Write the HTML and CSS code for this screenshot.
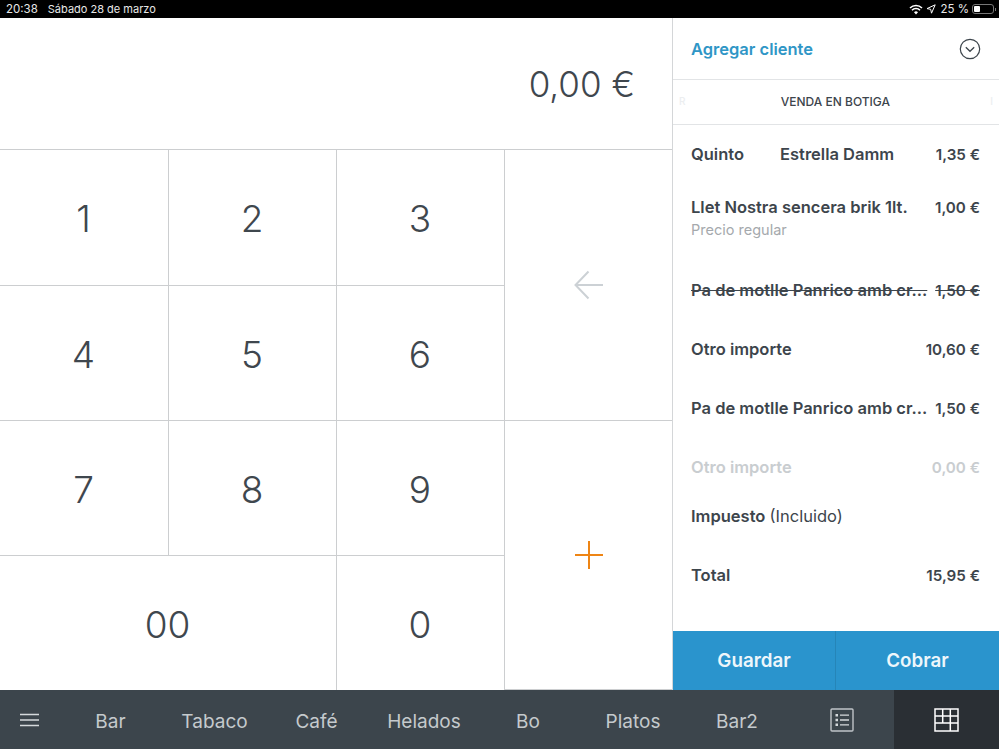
FILE: index.html
```html
<!DOCTYPE html>
<html lang="es">
<head>
<meta charset="utf-8">
<title>Punto de venta</title>
<link rel="stylesheet" href="styles.css">
</head>
<body>
<div class="app">
  <header class="status">
    <div class="status-left"><span class="time">20:38</span><span>Sábado 28 de marzo</span></div>
    <div class="status-right">
      <svg class="wifi" width="14" height="11" viewBox="0 0 14 11"><path d="M1 4a8.6 8.6 0 0 1 12 0M3 6.2a5.6 5.6 0 0 1 8 0" fill="none" stroke="#fff" stroke-width="1.6"/><path d="M5 8.2a2.9 2.9 0 0 1 4 0L7 10.4z" fill="#fff"/></svg>
      <svg class="loc" width="10" height="10" viewBox="0 0 10 10"><path d="M9.2.8 1 4.6l3.7.7.8 3.9z" fill="none" stroke="#fff" stroke-width="1"/></svg>
      <span class="pct">25 %</span>
      <span class="battery"><span class="battery-level"></span></span>
      <span class="battery-tip"></span>
    </div>
  </header>

  <div class="main">
    <section class="register">
      <div class="display">0,00 €</div>
      <div class="keypad">
        <button class="key">1</button>
        <button class="key">2</button>
        <button class="key">3</button>
        <button class="key key-side key-tall">
          <svg width="30" height="30" viewBox="0 0 30 30"><path d="M29 15H2M14.500 1.500 1.500 15l13 13.500" fill="none" stroke="#ccd1d5" stroke-width="2"/></svg>
        </button>
        <button class="key">4</button>
        <button class="key">5</button>
        <button class="key">6</button>
        <button class="key">7</button>
        <button class="key">8</button>
        <button class="key">9</button>
        <button class="key key-side key-tall">
          <svg width="30" height="30" viewBox="0 0 30 30"><path d="M1 15h28M15 1v28" fill="none" stroke="#ee8515" stroke-width="2"/></svg>
        </button>
        <button class="key key-wide key-bottom">00</button>
        <button class="key key-bottom">0</button>
      </div>
    </section>

    <aside class="cart">
      <div class="customer">
        <span class="customer-link">Agregar cliente</span>
        <svg width="22" height="22" viewBox="0 0 22 22"><circle cx="11" cy="11" r="9.700" fill="none" stroke="#3d454c" stroke-width="1.200"/><path d="M6.800 9.300 11 13.300l4.200-4" fill="none" stroke="#3d454c" stroke-width="1.300"/></svg>
      </div>
      <div class="mode"><span class="mode-ghost">R</span><span>VENDA EN BOTIGA</span><span class="mode-ghost">I</span></div>
      <div class="line"><span class="line-name"><span class="gap-word">Quinto</span>Estrella Damm</span><span class="price">1,35 €</span></div>
      <div class="line line-sub">
        <div class="line-top"><span class="line-name">Llet Nostra sencera brik 1lt.</span><span class="price">1,00 €</span></div>
        <div class="line-note">Precio regular</div>
      </div>
      <div class="line line-struck"><span class="line-name">Pa de motlle Panrico amb cr...</span><span class="price">1,50 €</span></div>
      <div class="line"><span class="line-name">Otro importe</span><span class="price">10,60 €</span></div>
      <div class="line"><span class="line-name">Pa de motlle Panrico amb cr...</span><span class="price">1,50 €</span></div>
      <div class="line line-muted"><span class="line-name">Otro importe</span><span class="price">0,00 €</span></div>
      <div class="line line-tax"><span class="line-name">Impuesto <span class="tax-note">(Incluido)</span></span></div>
      <div class="line"><span class="line-name">Total</span><span class="price">15,95 €</span></div>
      <div class="actions">
        <button class="action action-save">Guardar</button>
        <button class="action action-charge">Cobrar</button>
      </div>
    </aside>
  </div>

  <nav class="tabs">
    <span class="tab-menu"><svg width="20" height="14" viewBox="0 0 20 14"><path d="M0 1.500h19M0 7h19M0 12.500h19" stroke="#d5d9dc" stroke-width="1.600"/></svg></span>
    <span class="tab">Bar</span>
    <span class="tab">Tabaco</span>
    <span class="tab">Café</span>
    <span class="tab">Helados</span>
    <span class="tab">Bo</span>
    <span class="tab">Platos</span>
    <span class="tab">Bar2</span>
    <span class="tab-icon">
      <svg width="24" height="24" viewBox="0 0 24 24"><rect x="1" y="1" width="22" height="22" rx="1" fill="none" stroke="#bfc4c8" stroke-width="1.400"/><path d="M5.500 6h2.500v2.500H5.500zM5.500 10.800h2.500v2.500H5.500zM5.500 15.600h2.500v2.500H5.500z" fill="#d5d9dc"/><path d="M10 7.200h9M10 12h9M10 16.800h9" stroke="#d5d9dc" stroke-width="1.300"/></svg>
    </span>
    <span class="tab-active">
      <svg width="25" height="24" viewBox="0 0 25 24"><rect x="1" y="1" width="23" height="22" fill="none" stroke="#fff" stroke-width="1.500"/><path d="M1 8h23M1 15h23M8.700 1v14M16.300 1v22" fill="none" stroke="#fff" stroke-width="1.500"/></svg>
    </span>
  </nav>
</div>
</body>
</html>
```
FILE: styles.css
```css
* { box-sizing: border-box; }
html, body { margin: 0; padding: 0; }
body { width: 999px; height: 749px; overflow: hidden; background: #fff; font-family: "Inter", "Lato", sans-serif; color: #3d454c; }
button { font: inherit; color: inherit; background: none; border: 0; padding: 0; }
.app { display: flex; flex-direction: column; height: 749px; }

.status { height: 18px; flex: none; background: #000; color: #e8e8e8; display: flex; justify-content: space-between; align-items: center; padding: 0 3px 0 6px; font-size: 11px; }
.status-left { display: flex; gap: 10px; }
.status-left .time { font-size: 11.500px; }
.status-right { display: flex; align-items: center; }
.wifi { margin-right: 3px; }
.loc { margin-right: 4px; }
.pct { font-size: 11.500px; margin-right: 3px; }
.battery { width: 22px; height: 10px; border: 1px solid #777; border-radius: 3px; padding: 1px; display: flex; }
.battery-level { width: 6px; background: #fff; border-radius: 1px; }
.battery-tip { width: 1px; height: 3px; background: #777; margin-left: 1px; }

.main { flex: 1; display: flex; min-height: 0; }
.register { width: 673px; flex: none; display: flex; flex-direction: column; border-right: 1px solid #d4d6d8; }
.display { height: 132px; flex: none; display: flex; align-items: center; justify-content: flex-end; padding: 0 37px 0 0; font-size: 35px; font-weight: 300; color: #3f474e; border-bottom: 1px solid #ccced0; }
.keypad { flex: 1; display: grid; grid-template-columns: 169px 168px 168px 1fr; grid-template-rows: 136px 135px 135px 134px; }
.key { font-size: 37px; font-weight: 300; color: #3f474e; border-right: 1px solid #ccced0; border-bottom: 1px solid #ccced0; display: flex; align-items: center; justify-content: center; padding: 2px 1px 0 0; }
.key-side { border-right: 0; padding: 0; }
.key-tall { grid-row: span 2; grid-column: 4; }
.key-wide { grid-column: span 2; }
.key-bottom { border-bottom: 0; }
.key-side:last-of-type { border-bottom: 0; }

.cart { flex: 1; display: flex; flex-direction: column; font-size: 16.500px; font-weight: 600; color: #3d454c; }
.customer { height: 62px; flex: none; display: flex; align-items: center; justify-content: space-between; padding: 0 18px; border-bottom: 1px solid #e2e4e6; }
.customer-link { color: #2f96c6; font-size: 16.500px; }
.mode { height: 45px; flex: none; display: flex; align-items: center; justify-content: space-between; padding: 0 6px 2px 6px; font-size: 12px; color: #3d454c; border-bottom: 1px solid #e2e4e6; font-weight: 500; }
.mode span:nth-child(2) { margin-right: 5px; }
.mode-ghost { color: #eceef0; font-size: 10px; }
.line { height: 59px; flex: none; display: flex; align-items: center; justify-content: space-between; padding: 0 19px 1px 18px; white-space: nowrap; }
.price { font-size: 15.200px; }
.gap-word { display: inline-block; width: 89px; }
.line-sub { height: 77px; display: block; padding-top: 13px; }
.line-top { display: flex; justify-content: space-between; align-items: center; }
.line-note { font-size: 14.500px; font-weight: 400; color: #a5a9ad; margin-top: 4px; }
.line-struck span { text-decoration: line-through; }
.line-muted { color: #c9cdd0; }
.line-tax { height: 38px; margin-bottom: 11px; }
.tax-note { font-weight: 400; }
.actions { margin-top: auto; height: 59px; flex: none; display: flex; background: #2a94cd; color: #edf6fb; font-size: 18.800px; font-weight: 600; }
.action { display: flex; align-items: center; justify-content: center; }
.action-save { width: 162px; flex: none; }
.action-charge { flex: 1; border-left: 1px solid #2585b8; }

.tabs { height: 59px; flex: none; background: #3c454c; color: #c5cacd; font-size: 19px; font-weight: 400; display: grid; grid-template-columns: 59px 103px 105px 99px 116px 92px 118px 90px 112px 105px; align-items: stretch; }
.tab, .tab-menu, .tab-icon, .tab-active { display: flex; align-items: center; justify-content: center; }
.tab { padding-top: 3px; }
.tab-icon { padding-left: 8px; }
.tab-active { background: #2a2f34; }
```
